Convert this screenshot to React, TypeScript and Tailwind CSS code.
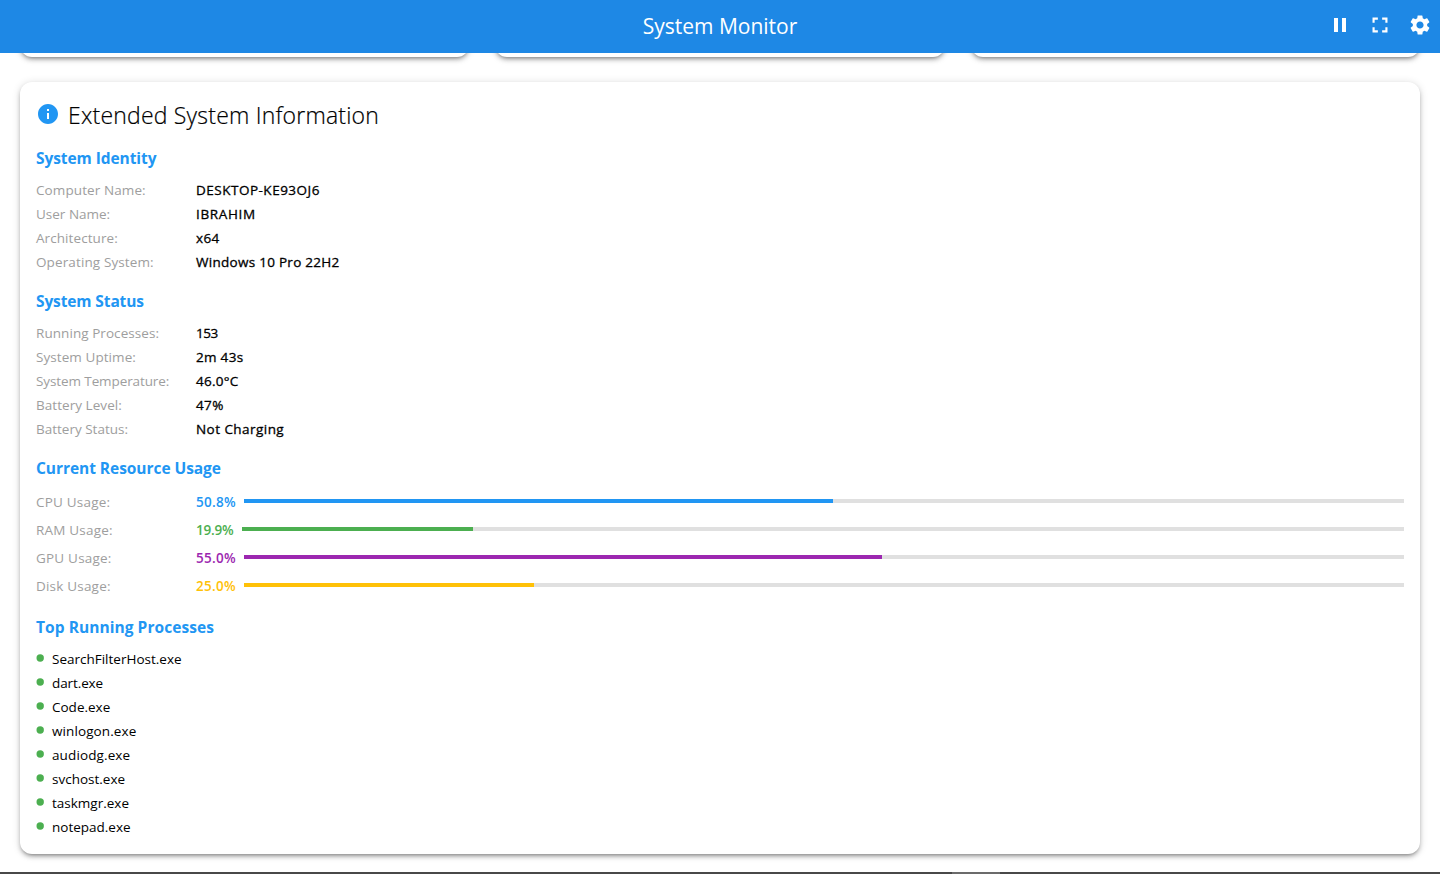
import type { ReactNode } from "react";
import { MdFullscreen, MdInfo, MdPause, MdSettings } from "react-icons/md";

type Row = { label: string; labelFit: string; value: string; fit: string };

const identity: Row[] = [
  { label: "Computer Name:", labelFit: "tracking-[0.1px]", value: "DESKTOP-KE93OJ6", fit: "tracking-[0.5px]" },
  { label: "User Name:", labelFit: "", value: "IBRAHIM", fit: "tracking-[0.65px]" },
  { label: "Architecture:", labelFit: "tracking-[0.08px]", value: "x64", fit: "tracking-[0.4px]" },
  { label: "Operating System:", labelFit: "tracking-[0.12px]", value: "Windows 10 Pro 22H2", fit: "tracking-[0.28px]" },
];

const status: Row[] = [
  { label: "Running Processes:", labelFit: "tracking-[0.06px]", value: "153", fit: "tracking-[-0.5px]" },
  { label: "System Uptime:", labelFit: "tracking-[0.07px]", value: "2m 43s", fit: "tracking-[0.3px]" },
  { label: "System Temperature:", labelFit: "tracking-[-0.1px]", value: "46.0°C", fit: "tracking-[0.25px]" },
  { label: "Battery Level:", labelFit: "tracking-[0.05px]", value: "47%", fit: "tracking-[0.4px]" },
  { label: "Battery Status:", labelFit: "", value: "Not Charging", fit: "tracking-[0.45px]" },
];

const usage = [
  { label: "CPU Usage:", value: 50.8, text: "text-[#2196f3] tracking-[0.3px]", bar: "bg-[#2196f3]", width: "w-12" },
  { label: "RAM Usage:", value: 19.9, text: "text-[#4caf50] tracking-[-0.2px]", bar: "bg-[#4caf50]", width: "w-[46px]" },
  { label: "GPU Usage:", value: 55.0, text: "text-[#9c27b0] tracking-[0.3px]", bar: "bg-[#9c27b0]", width: "w-12" },
  { label: "Disk Usage:", value: 25.0, text: "text-[#ffc107] tracking-[0.3px]", bar: "bg-[#ffc107]", width: "w-12" },
];

const processes = [
  { name: "SearchFilterHost.exe", fit: "" },
  { name: "dart.exe", fit: "tracking-[-0.1px]" },
  { name: "Code.exe", fit: "" },
  { name: "winlogon.exe", fit: "tracking-[0.1px]" },
  { name: "audiodg.exe", fit: "tracking-[0.12px]" },
  { name: "svchost.exe", fit: "" },
  { name: "taskmgr.exe", fit: "" },
  { name: "notepad.exe", fit: "" },
];

const cardShadow =
  "shadow-[0_3px_3px_-2px_rgba(0,0,0,0.26),0_3px_4px_0_rgba(0,0,0,0.2),0_1px_8px_0_rgba(0,0,0,0.14)]";

function Section({ title, fit, children }: { title: string; fit: string; children: ReactNode }) {
  return (
    <section>
      <h3 className="mb-2 -mt-px h-6 text-[15.5px] leading-6 font-bold text-[#2196f3]">
        <span className={fit}>{title}</span>
      </h3>
      {children}
    </section>
  );
}

function InfoRows({ rows }: { rows: Row[] }) {
  return (
    <div>
      {rows.map((r) => (
        <div key={r.label} className="flex h-6 items-center">
          <span className="w-40 shrink-0 text-[#9e9e9e]">
            <span className={r.labelFit}>{r.label}</span>
          </span>
          <span className="[-webkit-text-stroke:0.3px_black]">
            <span className={r.fit}>{r.value}</span>
          </span>
        </div>
      ))}
    </div>
  );
}

export default function App() {
  return (
    <div className="flex h-[874px] w-[1440px] flex-col overflow-hidden bg-white font-['Open_Sans','Noto_Sans',sans-serif] text-[13.5px] leading-6 whitespace-nowrap text-black">
      <header className="z-10 grid h-[53px] shrink-0 grid-cols-[1fr_auto_1fr] items-center bg-[#1e88e5] text-white">
        <span />
        <h1 className="pb-px text-[21px] leading-8">System Monitor</h1>
        <div className="flex items-center justify-end gap-4 pr-2 pb-[3px]">
          <MdPause size={24} />
          <MdFullscreen size={24} className="scale-[1.07]" />
          <MdSettings size={24} />
        </div>
      </header>

      <main className="flex min-h-0 grow flex-col px-5">
        <div className="-mt-7 grid h-8 shrink-0 grid-cols-3 gap-[26px]">
          <div className={`rounded-xl bg-white ${cardShadow}`} />
          <div className={`rounded-xl bg-white ${cardShadow}`} />
          <div className={`rounded-xl bg-white ${cardShadow}`} />
        </div>

        <div className={`mt-[25px] flex h-[772px] shrink-0 flex-col gap-4 rounded-xl bg-white p-4 ${cardShadow}`}>
          <div className="flex h-[33px] shrink-0 items-center gap-2">
            <MdInfo size={24} className="mb-[1px] text-[#2196f3]" />
            <h2 className="text-[23px] leading-8 font-light tracking-[0.2px] [-webkit-text-stroke:0.2px_black]">
              Extended System Information
            </h2>
          </div>

          <Section title="System Identity" fit="tracking-[-0.07px]">
            <InfoRows rows={identity} />
          </Section>

          <Section title="System Status" fit="tracking-[-0.12px]">
            <InfoRows rows={status} />
          </Section>

          <Section title="Current Resource Usage" fit="tracking-[-0.05px]">
            {usage.map((u) => (
              <div key={u.label} className="flex h-7 items-center">
                <span className="w-40 shrink-0 tracking-[0.2px] text-[#9e9e9e]">{u.label}</span>
                <span className={`shrink-0 font-semibold ${u.text} ${u.width}`}>{u.value.toFixed(1)}%</span>
                <div className="mb-[2px] h-1 grow bg-[#e0e0e0]">
                  <div className={`h-full ${u.bar}`} style={{ width: `${u.value}%` }} />
                </div>
              </div>
            ))}
          </Section>

          <Section title="Top Running Processes" fit="tracking-[0.06px]">
            <ul>
              {processes.map((p) => (
                <li key={p.name} className="flex h-6 items-center gap-2">
                  <svg viewBox="0 0 8 8" className="mb-[2px] size-2" aria-hidden="true">
                    <circle cx="4.2" cy="4" r="3.7" fill="#4caf50" />
                  </svg>
                  <span className={p.fit}>{p.name}</span>
                </li>
              ))}
            </ul>
          </Section>
        </div>
      </main>

      <footer className="flex h-[2px] shrink-0 bg-[#484848]">
        <span className="ml-[952px] w-12 bg-[#6b6b6b]" />
      </footer>
    </div>
  );
}
